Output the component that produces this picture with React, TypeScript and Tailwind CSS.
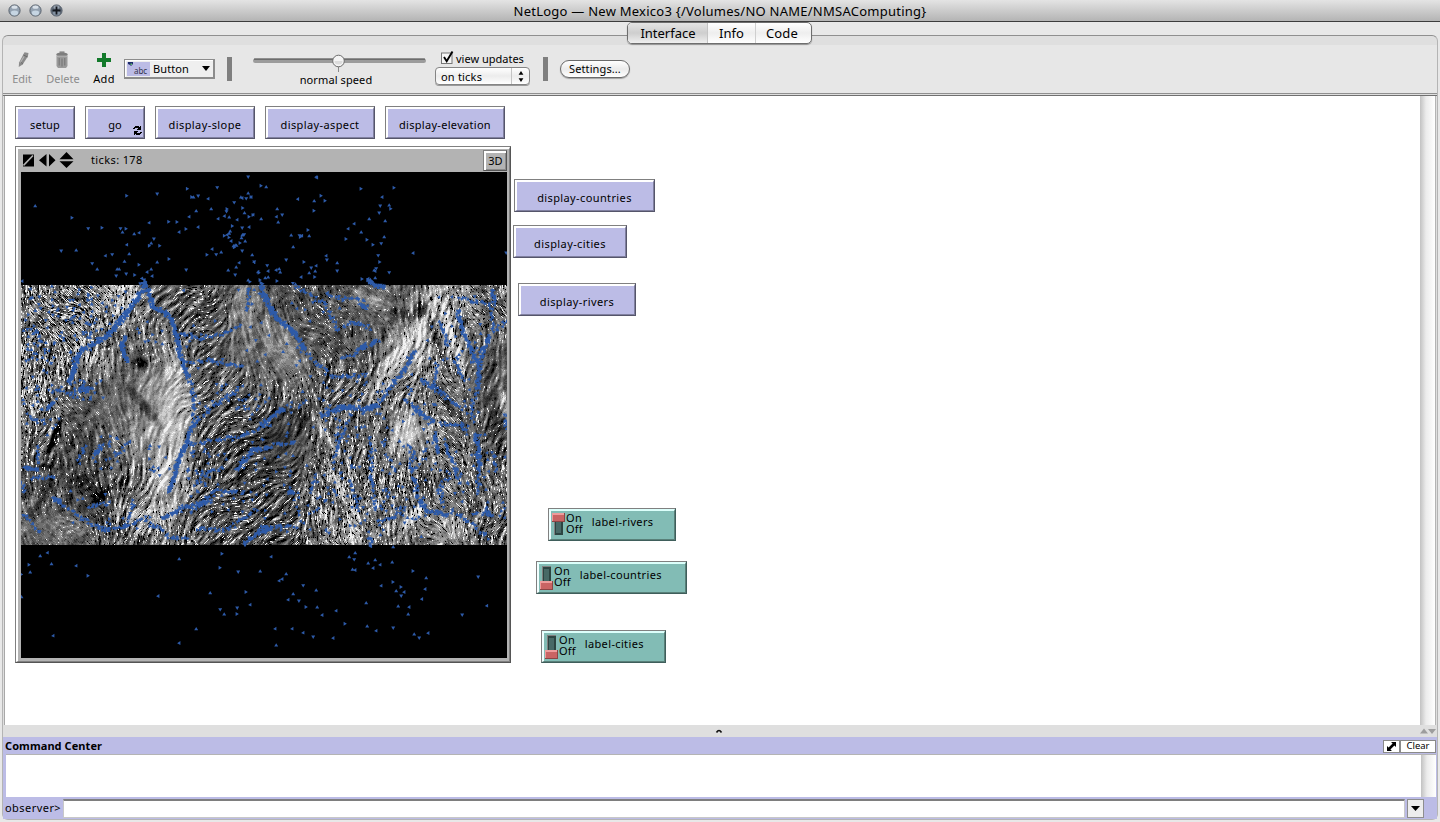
import { useMemo } from "react";
import type { ReactNode } from "react";

/* ---------- terrain model ---------- */
const W = 486;
const H = 260;
const BLUE = "#2d5aa8";

// brightness (0-9) of the relief on a coarse 12x6 lattice
const LUM = [
  [5, 5, 6.6, 4.2, 3.4, 4.9, 3.4, 3.7, 4.2, 4.7, 6.6, 5.4],
  [5, 5.6, 4.2, 5, 3.9, 4.8, 4.7, 3.9, 3.9, 6.2, 6.2, 4.2],
  [5.5, 4, 4.6, 7, 4.3, 4.1, 4.3, 4.3, 4.8, 5.2, 5.2, 3.8],
  [4.6, 3.2, 5.2, 7.6, 3.6, 3.2, 2.7, 4.5, 4.6, 6.9, 5.1, 3.9],
  [3.4, 2.9, 3.6, 6.8, 3.8, 3.1, 3, 4.7, 5.1, 5.1, 5, 4.6],
  [4.2, 4.2, 4.5, 5.6, 4.1, 3.3, 3.3, 5, 5.5, 5, 5.5, 4.4],
];
// amount of fine black/white speckle
const CON = [
  [11, 11, 9, 6, 8, 4, 6, 7, 5, 6, 8, 9],
  [11, 10, 6, 7, 7, 4, 3, 7, 6, 6, 8, 5],
  [11, 6, 4, 2, 8, 8, 8, 8, 9, 8, 9, 5],
  [8, 6, 6, 3, 8, 8, 2, 8, 8, 4, 9, 7],
  [7, 6, 8, 6, 8, 8, 7, 9, 11, 10, 9, 8],
  [5, 6, 9, 8, 8, 8, 8, 9, 9, 7, 7, 9],
];
// direction of the valleys in degrees, y pointing down
const ANG = [
  [50, 52, 80, 110, 150, 100, 38, 40, 50, 60, 70, 60],
  [70, 80, 100, 100, 130, 70, 65, 45, 60, 115, 70, 100],
  [80, 60, 60, 130, 140, 125, 100, 110, 110, 110, 60, 100],
  [100, 70, 60, 100, 135, 145, 150, 60, 90, 90, 65, 110],
  [80, 60, 110, 110, 130, 150, 155, 65, 95, 80, 65, 90],
  [50, 45, 110, 110, 150, 160, 160, 75, 80, 60, 45, 110],
];

function hash(x: number, y: number, s: number) {
  let h = Math.imul(x, 374761393) ^ Math.imul(y, 668265263) ^ Math.imul(s, 1442695041);
  h = Math.imul(h ^ (h >>> 13), 1274126177);
  h ^= h >>> 16;
  return (h >>> 0) / 4294967296;
}

function smooth(x: number, y: number, s: number) {
  const xi = Math.floor(x);
  const yi = Math.floor(y);
  const fx = x - xi;
  const fy = y - yi;
  const u = fx * fx * (3 - 2 * fx);
  const v = fy * fy * (3 - 2 * fy);
  const a = hash(xi, yi, s) * (1 - u) + hash(xi + 1, yi, s) * u;
  const b = hash(xi, yi + 1, s) * (1 - u) + hash(xi + 1, yi + 1, s) * u;
  return a * (1 - v) + b * v;
}

function lattice(t: number[][], x: number, y: number) {
  const gx = Math.min(10.999, Math.max(0, (x - 20) / 40.5));
  const gy = Math.min(4.999, Math.max(0, (y - 22) / 43.3));
  const c = Math.floor(gx);
  const r = Math.floor(gy);
  const u = gx - c;
  const v = gy - r;
  return (t[r][c] * (1 - u) + t[r][c + 1] * u) * (1 - v) + (t[r + 1][c] * (1 - u) + t[r + 1][c + 1] * u) * v;
}

// local accents: centre, radii, tilt, brightness change
const ACCENTS: number[][] = [
  [160, 130, 18, 44, 0, 1.8],
  [152, 75, 14, 26, -20, 1.6],
  [150, 190, 22, 22, 10, 1.8],
  [120, 78, 9, 6, 20, -4],
  [122, 120, 5, 26, -40, -3],
  [33, 152, 3, 22, 20, -5],
  [24, 182, 8, 4, 0, -3],
  [70, 70, 26, 12, 40, 1.4],
  [130, 232, 30, 14, -20, 2],
  [100, 225, 12, 10, 0, 2],
  [75, 210, 10, 26, -50, -2],
  [90, 240, 40, 7, 30, -1.5],
  [40, 238, 26, 12, 0, 0.8],
  [104, 12, 10, 24, 25, 2],
  [225, 22, 14, 22, 0, 1.2],
  [262, 62, 14, 40, -35, 1.6],
  [266, 126, 22, 5, 15, -2],
  [262, 146, 34, 8, -20, -1],
  [305, 150, 4, 26, -35, 3],
  [320, 205, 4, 34, -30, 3],
  [300, 225, 4, 24, -35, 2.4],
  [376, 70, 8, 52, 30, 3.4],
  [403, 40, 5, 52, 14, 2.8],
  [400, 25, 7, 10, 0, -4],
  [380, 28, 15, 5, 20, -3],
  [350, 15, 26, 6, 25, 1.8],
  [385, 145, 14, 20, 0, 2],
  [362, 152, 6, 26, 10, -1.6],
  [430, 50, 6, 40, -20, 2.6],
  [415, 55, 4, 34, -20, -3],
  [470, 20, 10, 18, 0, -1.4],
  [480, 72, 6, 40, 50, -1],
  [476, 140, 9, 30, 0, -1.4],
  [483, 122, 4, 22, -10, 4],
  [405, 200, 5, 30, -10, -2.6],
  [425, 115, 5, 26, -35, -2.6],
  [392, 232, 6, 22, 40, 3.4],
  [430, 242, 20, 12, 30, 1.6],
  [330, 245, 10, 14, 0, 2],
];

function relief() {
  const field = new Float32Array(W * H);
  for (let y = 0; y < H; y++)
    for (let x = 0; x < W; x++)
      field[y * W + x] = ((lattice(ANG, x, y) + (smooth(x / 24, y / 24, 5) - 0.5) * 70) * Math.PI) / 180;
  const at = (x: number, y: number) =>
    field[Math.max(0, Math.min(H - 1, Math.round(y))) * W + Math.max(0, Math.min(W - 1, Math.round(x)))];

  // noise averaged along the valley direction
  const comb = (x: number, y: number, step: number, count: number, sample: (a: number, b: number) => number) => {
    let sum = sample(x, y);
    for (let dir = -1; dir <= 1; dir += 2) {
      let px = x;
      let py = y;
      for (let k = 0; k < count; k++) {
        const a = at(px, py);
        px += Math.cos(a) * step * dir;
        py += Math.sin(a) * step * dir;
        sum += sample(px, py);
      }
    }
    return sum / (2 * count + 1) - 0.5;
  };
  const coarse = new Float32Array(W * H);
  for (let y = 0; y < H; y++)
    for (let x = 0; x < W; x++) coarse[y * W + x] = comb(x, y, 2.2, 2, (a, b) => smooth(a / 2.6, b / 2.6, 21));

  const shades = ["#000000", "#1c1c1c", "#303030", "#434343", "#585858", "#6e6e6e", "#868686", "#a0a0a0", "#b8b8b8", "#d0d0d0", "#f2f2f2"];
  const paths: string[][] = shades.map(() => []);
  for (let y = 0; y < H; y++) {
    let start = 0;
    let last = -1;
    for (let x = 0; x <= W; x++) {
      let lvl = -2;
      if (x < W) {
        const n = comb(x, y, 1, 1, (a, b) => hash(Math.round(a), Math.round(b), 1)) * 1.7;
        const con = lattice(CON, x, y);
        let v = lattice(LUM, x, y) + 0.1;
        // spurs crossing the slope, lit from the upper left
        const face = coarse[y * W + x] - coarse[Math.min(H - 1, y + 2) * W + Math.min(W - 1, x + 2)];
        v += face * (3 + con * 0.75) + coarse[y * W + x] * 2;
        const big = smooth(x / 9, y / 9, 3) - smooth(x / 9 + 0.35, y / 9 + 0.25, 3);
        v += big * 3.4;
        for (const [ax, ay, rx, ry, t, d] of ACCENTS) {
          const ex = x - ax;
          const ey = y - ay;
          if (Math.abs(ex) > 70 || Math.abs(ey) > 70) continue;
          const tr = (t * Math.PI) / 180;
          const qx = (ex * Math.cos(tr) + ey * Math.sin(tr)) / rx;
          const qy = (-ex * Math.sin(tr) + ey * Math.cos(tr)) / ry;
          const q = qx * qx + qy * qy;
          if (q < 2.2) v += d * Math.exp(-q * q);
        }
        v += n * con * 0.16;
        v += (hash(x, y, 31) - 0.5) * 0.9;
        const spark = n * con + face * 4;
        if (spark > 3.7) v = 10.5;
        else if (spark > 3) v += 2;
        if (spark < -3.8) v = 0;
        else if (spark < -3) v -= 2;
        lvl = Math.max(0, Math.min(10, Math.round(v)));
      }
      if (lvl !== last) {
        if (last >= 0) paths[last].push(`M${start} ${y}h${x - start}v1h-${x - start}z`);
        start = x;
        last = lvl;
      }
    }
  }
  return shades.map((fill, i) => ({ fill, d: paths[i].join("") }));
}

/* ---------- water: streams and single drops, coordinates at 3x ---------- */
// each entry: thickness, then x,y pairs relative to the relief's left edge
const WEST: number[][] = [
  [5, 400, 0, 400, 22, 370, 70, 330, 125],
  [3.6, 330, 125, 290, 170, 210, 212, 192, 270, 175, 305],
  [3.6, 410, 20, 430, 80, 470, 100, 490, 130, 495, 160],
  [4.4, 495, 160, 515, 235, 535, 290],
  [2, 535, 290, 546, 330, 552, 380, 548, 440],
  [3.2, 545, 440, 530, 490, 505, 540, 490, 600, 475, 635],
  [3.4, 345, 168, 335, 200, 352, 240],
  [2.2, 500, 160, 570, 175, 640, 160, 690, 140],
  [1.4, 530, 245, 600, 240, 650, 255, 700, 255],
  [3.2, 45, 565, 82, 567],
  [2.2, 60, 595, 132, 588],
  [3, 128, 655, 150, 665],
  [2, 130, 655, 210, 712, 280, 750],
  [2.2, 280, 750, 345, 740, 400, 715, 440, 740, 480, 772, 530, 775],
  [2, 545, 440, 620, 370, 690, 320],
  [2, 540, 495, 620, 480, 700, 465, 780, 432],
  [2.5, 680, 570, 700, 545, 730, 510, 780, 505],
  [2.4, 455, 720, 520, 682, 600, 665],
  [1.8, 555, 620, 600, 575, 640, 565],
  [3, 130, 365, 112, 388],
  [1.8, 60, 420, 105, 428],
  [2, 130, 330, 180, 342, 240, 330],
  [2.5, 205, 325, 240, 328],
  [2.5, 250, 525, 275, 498],
  [1.6, 205, 540, 225, 500],
  [2, 320, 530, 360, 482],
  [2.5, 700, 792, 735, 765, 780, 748],
  [1.8, 80, 500, 84, 550],
  [2, 35, 600, 42, 640],
  [1.8, 38, 700, 90, 758],
  [2, 345, 745, 370, 665],
  [1.5, 230, 680, 300, 670],
  [1.6, 715, 20, 712, 90],
  [1.4, 270, 740, 300, 748],
  [1.4, 560, 745, 650, 750, 740, 690],
  [1.4, 540, 700, 620, 630, 700, 640],
];
const EAST: number[][] = [
  [5, 0, 20, 20, 60, 45, 110],
  [3.6, 45, 110, 75, 135, 110, 165, 130, 205],
  [2, 130, 205, 170, 255, 205, 270],
  [2.4, 180, 408, 240, 382, 330, 385, 355, 375],
  [2.5, 235, 380, 280, 383],
  [3, 320, 385, 350, 380],
  [2, 360, 370, 400, 310],
  [2.5, 400, 310, 430, 272, 462, 215],
  [3, 325, 0, 345, 15, 375, 22],
  [1.8, 110, 20, 190, 70, 215, 110, 235, 148],
  [2, 245, 140, 285, 128, 330, 142],
  [1.6, 200, 40, 250, 58, 310, 60],
  [3.4, 300, 75, 318, 82],
  [2.2, 240, 235, 280, 225, 300, 205],
  [2.5, 290, 208, 320, 195, 352, 185],
  [2.2, 200, 287, 320, 287],
  [2.5, 0, 438, 40, 408, 75, 382],
  [2.5, 592, 90, 602, 130, 612, 160],
  [2.4, 612, 160, 630, 200, 640, 225, 660, 260],
  [2.5, 660, 260, 655, 320],
  [2.2, 655, 320, 636, 370, 638, 420],
  [2.5, 645, 460, 655, 510, 655, 560],
  [2, 655, 560, 652, 640],
  [2.5, 690, 165, 672, 200, 664, 240],
  [2, 738, 122, 700, 155],
  [2.2, 595, 55, 650, 65, 700, 72],
  [2.5, 700, 30, 700, 60],
  [2.2, 695, 80, 697, 145],
  [2, 440, 362, 480, 395],
  [2.5, 465, 385, 495, 412, 520, 425],
  [1.6, 540, 432, 605, 432, 615, 460],
  [2.4, 480, 300, 550, 340],
  [1.8, 550, 345, 600, 385],
  [2.5, 520, 460, 535, 520],
  [2, 550, 480, 585, 560, 600, 610],
  [2, 330, 470, 335, 600, 345, 690],
  [1.8, 265, 420, 235, 500, 215, 545],
  [2, 455, 500, 452, 560, 475, 640],
  [2.4, 470, 650, 500, 690, 560, 705],
  [2.2, 570, 690, 620, 720, 680, 772],
  [1.8, 640, 700, 690, 700],
  [3.6, 678, 690, 688, 700],
  [2, 350, 725, 400, 712, 430, 685],
  [1.8, 0, 748, 55, 740, 105, 740],
  [1.6, 270, 600, 295, 690],
  [1.8, 540, 600, 548, 675],
  [2, 0, 507, 60, 492, 105, 490],
  [1.8, 530, 250, 525, 310],
  [2, 580, 240, 610, 300],
  [2, 540, 120, 560, 190],
  [3, 88, 632, 102, 640],
  [1.6, 150, 640, 165, 590],
  [2.5, 325, 770, 335, 790],
  [1.6, 737, 400, 738, 445],
  [1.8, 700, 520, 705, 570],
  [2.5, 0, 742, 20, 745],
];

// drop clouds: x, y, rx, ry, count (picture units inside the relief)
const CLOUDS: number[][] = [
  [35, 40, 36, 40, 100],
  [75, 30, 30, 26, 44],
  [15, 85, 22, 45, 45],
  [20, 125, 22, 25, 18],
  [65, 105, 18, 10, 28],
  [75, 165, 22, 20, 26],
  [130, 45, 14, 14, 12],
  [140, 175, 14, 16, 16],
  [60, 225, 30, 20, 8],
  [110, 232, 30, 12, 8],
  [200, 30, 50, 30, 16],
  [205, 70, 40, 15, 12],
  [210, 115, 40, 18, 40],
  [220, 190, 60, 40, 60],
  [180, 185, 14, 28, 26],
  [270, 130, 50, 20, 20],
  [300, 50, 40, 40, 22],
  [320, 110, 50, 20, 36],
  [345, 175, 34, 50, 76],
  [390, 195, 30, 40, 50],
  [420, 100, 40, 40, 46],
  [430, 190, 40, 50, 50],
  [440, 45, 35, 35, 26],
  [470, 200, 16, 35, 24],
  [300, 210, 40, 35, 24],
  [270, 225, 50, 25, 26],
  [380, 235, 40, 18, 14],
];

// isolated walkers above and below the relief
const ABOVE_A = [744,261,651,293,562,296,380,317,471,312,575,321,580,321,594,318,624,326,105,347,216,383,264,416,306,413,361,416,378,416,367,426,402,431,417,428,447,398,506,395,531,396,567,380,588,362,633,356,702,338,722,321,726,324,738,326,744,309,753,321,728,354,733,368,681,357,679,365,673,378,687,381,654,386,711,389,747,380,759,374,594,411,558,417,537,426,697,408,726,414,747,411,690,423,687,430,673,437,681,434,687,442,726,435,732,434,724,443,735,453,720,459,705,465,709,466,703,472,700,467,693,453,461,447,453,459,448,467,479,467,380,464,183,483,228,480,316,497,336,494,387,491,507,507,471,516,417,524,373,514,276,521,291,537,351,537,357,537,348,558,378,552,404,555,453,537,441,546,456,558,558,540,621,494,636,477,648,494,663,486,726,483,756,494,717,518,708,531,684,540,762,516,705,555,66,573,744,570,750,575,774,545,425,565,432,570,430,578,436,580,420,582];
const ABOVE_B = [198,261,200,263,33,287,48,290,333,296,432,293,396,321,213,317,225,332,192,332,143,327,3,321,192,362,81,356,9,375,96,375,79,380,84,396,33,386,390,348,417,345,422,356,387,369,405,392,357,386,312,401,294,416,333,426,288,447,351,449,369,464,402,440,393,461,174,420,177,437,123,435,148,437,155,437,151,441,129,470,489,489,768,489,6,494,12,516,108,510,162,516,228,497,230,510,261,518,261,543,198,527,195,543,183,534,177,548,194,561,153,561,51,527,54,543,27,548,78,540,90,546,87,536,54,561,45,563,81,573,30,570,24,546,384,497,389,516,378,536,372,540,375,543,417,548,336,567,354,566,375,563,357,575,365,578,360,580,128,580,136,582,33,578,38,581];
const BELOW = [97,38,75,47,42,74,45,96,109,71,183,77,219,107,19,103,19,170,114,287,429,168,492,56,621,41,615,83,669,96,735,93,768,50,813,101,801,117,792,122,864,137,903,150,834,161,819,179,851,183,693,156,585,158,705,194,666,204,666,222,615,209,627,222,873,201,906,201,921,225,963,212,990,251,543,266,492,309,780,266,831,266,864,278,894,291,954,294,783,315,1056,258,1083,272,1134,264,1197,282,1212,294,1239,279,1341,225,1415,197,1389,111,1220,177,1230,147,1233,113,1194,93,1182,201,1179,222,1149,198,1158,168,1167,156,1143,152,1158,141,1134,126,1098,137,1053,188,1131,66,1095,74,1074,84,1080,59,1059,69,1020,38,1002,50,1017,59,1012,88,1020,90,1067,19,1134,20];

function buildWater() {
  const out: string[] = [];
  let seed = 1;
  const rnd = () => hash(seed++, 77, 13);
  // every triangle is wound clockwise so that overlaps stay filled
  const walker = (x: number, y: number) => {
    const k = Math.floor(rnd() * 4);
    const cx = x.toFixed(1);
    const cy = y.toFixed(1);
    if (k === 0) out.push(`M${cx} ${cy}m.2-1.800l2 3.300h-4z`);
    else if (k === 1) out.push(`M${cx} ${cy}m.2 1.900l-2-3.300h4z`);
    else if (k === 2) out.push(`M${cx} ${cy}m-1.400-1.900l3.300 2l-3.300 1.900z`);
    else out.push(`M${cx} ${cy}m1.400-1.900v3.800l-3.300-1.700z`);
  };
  const draw = (sets: number[][], ox: number) => {
    for (const s of sets) {
      const w = s[0];
      for (let i = 1; i + 3 < s.length; i += 2) {
        const x0 = s[i] / 3 + ox;
        const y0 = s[i + 1] / 3 + 108;
        const x1 = s[i + 2] / 3 + ox;
        const y1 = s[i + 3] / 3 + 108;
        const len = Math.hypot(x1 - x0, y1 - y0);
        const n = Math.ceil(len * (w > 2.5 ? 1.4 : w > 2.3 ? 0.9 : 0.42));
        for (let k = 0; k <= n; k++) {
          const t = (k + rnd() * 0.6) / n;
          const j = w > 2.5 ? w : w > 2.3 ? 4 : 3.4;
          walker(x0 + (x1 - x0) * t + (rnd() - 0.5) * j, y0 + (y1 - y0) * t + (rnd() - 0.5) * j);
        }
      }
    }
  };
  draw(WEST, -11);
  draw(EAST, 239);
  for (const [cx, cy, rx, ry, n] of CLOUDS) {
    for (let k = 0; k < n * 0.8; k++) {
      const x = cx + (rnd() * 2 - 1) * rx;
      const y = cy + (rnd() * 2 - 1) * ry;
      if (x > 1 && x < W - 2 && y > 1 && y < H - 2) walker(x, y + 113);
    }
  }
  const single = (list: number[], ox: number, oy: number) => {
    for (let i = 0; i < list.length; i += 2) walker(list[i] / 3 + ox, list[i + 1] / 3 + oy);
  };
  single(ABOVE_A, -21, -82);
  single(ABOVE_B, 229, -82);
  single(BELOW, -6, 368);
  return out.join("");
}

function WorldView() {
  const layers = useMemo(relief, []);
  const water = useMemo(buildWater, []);
  return (
    <svg width={486} height={486} viewBox="0 0 486 486" className="block bg-black">
      <g transform="translate(0 113)" shapeRendering="crispEdges">
        {layers.map((l) => (
          <path key={l.fill} d={l.d} fill={l.fill} />
        ))}
      </g>
      <path d={water} fill={BLUE} />
    </svg>
  );
}

/* ---------- widgets ---------- */
function Bevel({ className, children }: { className: string; children?: ReactNode }) {
  return (
    <div className={`absolute border border-[#808080] border-r-[#55556a] border-b-[#55556a] ${className}`}>
      <div className="flex h-full w-full items-center justify-center border-2 border-r-1 border-b-1 border-t-white border-r-[#8080a0] border-b-[#8080a0] border-l-white bg-[#bcbce6] pt-[3px] pr-px text-[11px] leading-none">
        {children}
      </div>
    </div>
  );
}

function Switch({ className, label, on }: { className: string; label: string; on?: boolean }) {
  return (
    <div className={`absolute h-[33px] border border-[#808080] border-r-[#3f5e5b] border-b-[#3f5e5b] ${className}`}>
      <div className="flex h-full w-full border-2 border-r-1 border-b-1 border-t-[#dcfffb] border-r-[#598079] border-b-[#598079] border-l-[#f2ffff] bg-[#82bcb5]">
        <svg width="14" height="26" viewBox="0 0 14 26" shapeRendering="crispEdges" className="mt-px ml-px block shrink-0">
          <path d="M2 1h9v22h-9z" fill="#808080" />
          <path d="M3 2h8v21h-8z" fill="#2c4441" />
          <path d="M4 4h5v17h-5z" fill="#476966" />
          <g transform={on ? "translate(0 1)" : "translate(0 16)"}>
            <path d="M0 0h13v9h-13z" fill="#8a4545" />
            <path d="M0 0h12v8h-12z" fill="#ee9c9c" />
            <path d="M1 2h11v6h-11z" fill="#c96464" />
          </g>
        </svg>
        <div className="pt-px text-[11px] leading-[11px]">
          <div className="tracking-[0.3px]">On</div>
          <div className="tracking-[0.2px]">Off</div>
        </div>
        <div className="ml-[9px] pt-[4px] text-[11px] leading-[13px] tracking-[0.36px]">{label}</div>
      </div>
    </div>
  );
}

function Light({ plus }: { plus?: boolean }) {
  return (
    <svg width="13" height="13" viewBox="0 0 13 13" className="block">
      <circle cx="6.5" cy="6.5" r="5.6" fill={plus ? "#5f6a78" : "#93a1b0"} stroke="#59626d" strokeWidth="1" />
      <ellipse cx="6.5" cy="9" rx="3.6" ry="2.4" fill={plus ? "#8492a2" : "#c6d5e2"} />
      <ellipse cx="6.5" cy="3.2" rx="3" ry="1.6" fill={plus ? "#98a3b0" : "#d9e1e9"} />
      {plus && <path d="M6.500 2.500v8M2.500 6.500h8" stroke="#14181e" strokeWidth="1.8" />}
    </svg>
  );
}

function TitleBar() {
  return (
    <div className="flex h-[22px] shrink-0 items-center border-b border-[#3c3c3c] bg-linear-to-b from-[#e4e4e4] to-[#b4b4b4]">
      <div className="flex w-[100px] gap-2 pl-[8px]">
        <Light />
        <Light />
        <Light plus />
      </div>
      <div className="flex-1 text-center text-[13px] leading-[20px] tracking-[0.25px]">
        NetLogo — New Mexico3 {"{/Volumes/NO NAME/NMSAComputing}"}
      </div>
      <div className="w-[100px]" />
    </div>
  );
}

function Tabs() {
  return (
    <div className="absolute top-[-14px] left-[624px] flex h-[22px] w-[185px] overflow-hidden rounded-[5px] border border-[#6e6e6e] bg-linear-to-b from-white via-[#eeeeee] to-white text-[13px] leading-[20px] shadow-[0_1px_1px_rgba(0,0,0,0.35)]">
      <div className="w-[80px] border-r border-[#c4c4c4] bg-linear-to-b from-[#e4e4e4] via-[#cecece] to-[#efefef] pl-px text-center">Interface</div>
      <div className="w-[48px] border-r border-[#cfcfcf] text-center">Info</div>
      <div className="flex-1 pr-[3px] text-center tracking-[0.2px]">Code</div>
    </div>
  );
}

function Toolbar() {
  return (
    <div className="flex h-[48px] shrink-0 items-start bg-[#e7e7e7] text-[11px] leading-[13px]">
      <div className="ml-[7px] flex w-[24px] flex-col items-center text-[#8c8c8c]">
        <svg width="16" height="18" viewBox="0 0 16 18" className="mt-[6px] ml-px block">
          <path d="M9.500 1.200l4 .8-.6 3.300-5.200 8.200-4 2.600.4-4.600z" fill="#8b8b8b" />
          <path d="M8.500 4l4 2M5 10.500l2.800 2.200" stroke="#6b6b6b" strokeWidth="1" />
          <path d="M9 5.500l-3.600 6" stroke="#b5b5b5" strokeWidth="1.200" />
        </svg>
        <div className="mt-[3px]">Edit</div>
      </div>
      <div className="ml-[11px] flex w-[36px] flex-col items-center text-[#8c8c8c]">
        <svg width="14" height="18" viewBox="0 0 14 18" className="mt-[6px] mr-[2px] block">
          <path d="M1.500 4.500h11v10.500l-1.500 2h-8l-1.500-2z" fill="#9a9a9a" />
          <ellipse cx="7" cy="3.600" rx="5.800" ry="2.200" fill="#7d7d7d" />
          <path d="M4.500 1.200h5" stroke="#858585" strokeWidth="1.600" />
          <path d="M4.200 7v7.500M7 7.500v8M9.800 7v7.500" stroke="#737373" strokeWidth="1" />
          <path d="M2 5.200h10" stroke="#bdbdbd" strokeWidth="1" />
        </svg>
        <div className="mt-[3px]">Delete</div>
      </div>
      <div className="ml-[8px] flex w-[30px] flex-col items-center">
        <svg width="14" height="14" viewBox="0 0 14 14" shapeRendering="crispEdges" className="mt-[8px] block">
          <path d="M5 0h4v5h5v4h-5v5h-4v-5h-5v-4h5z" fill="#137a2b" />
        </svg>
        <div className="mt-[5px] tracking-[0.3px]">Add</div>
      </div>
      <div className="mt-[14px] ml-[5px] flex h-[20px] w-[91px] items-center border-2 border-t-1 border-l-1 border-[#8c8c8c] bg-[#efefef] px-[2px] shadow-[inset_1px_1px_0_white]">
        <div className="flex h-[14px] w-[23px] items-end bg-[#bcbce6]">
          <svg width="7" height="6" viewBox="0 0 7 6" className="mb-[8px] block">
            <path d="M1 0h5v2l-2 2-1-1-2-1z" fill="#1d2c6b" />
            <path d="M3.500 1.500h1.500v1.500h-1.500z" fill="#62c06a" />
          </svg>
          <span className="text-[8px] leading-[11px] tracking-[-0.1px] text-[#33334d]">abc</span>
        </div>
        <span className="ml-[3px] tracking-[0.1px]">Button</span>
        <svg width="8" height="5" viewBox="0 0 8 5" className="ml-auto block">
          <path d="M0 0h8l-4 5z" fill="#000" />
        </svg>
        <span className="w-[1px]" />
      </div>
      <div className="mt-[12px] ml-[12px] h-[24px] w-[5px] bg-[#7f7f7f]" />
      <div className="ml-[19px] w-[178px]">
        <svg width="178" height="24" viewBox="0 0 178 24" className="mt-[7px] block">
          <rect x="2" y="6.500" width="173" height="4.500" rx="2.200" fill="#9c9c9c" />
          <path d="M3 7.200h171" stroke="#5e5e5e" strokeWidth="1.200" />
          <path d="M87.500 14v6" stroke="#8a8a8a" strokeWidth="1" />
          <circle cx="87.500" cy="9" r="5.800" fill="#f4f4f4" stroke="#6d6d6d" strokeWidth="1" />
          <path d="M83.500 9a4 3.500 0 0 0 8 0z" fill="#dcdcdc" />
        </svg>
        <div className="mt-[-3px] pr-[8px] text-center tracking-[0.1px]">normal speed</div>
      </div>
      <div className="ml-[6px] w-[98px]">
        <div className="mt-[6px] flex h-[14px] items-center">
          <svg width="14" height="14" viewBox="0 0 14 14" className="ml-[5px] block">
            <rect x="1.500" y="2" width="10.500" height="10.500" fill="#f6f6f6" stroke="#777" />
            <path d="M4 6l2.700 4.200L12.500 .5" fill="none" stroke="#000" strokeWidth="1.900" />
          </svg>
          <span className="ml-[2px]">view updates</span>
        </div>
        <div className="mt-[2px] flex h-[18px] w-[95px] items-center rounded-[4px] border border-[#858585] bg-linear-to-b from-white via-[#ececec] to-white pl-[5px] shadow-[0_1px_0_#9a9a9a]">
          <span className="flex-1 tracking-[0.2px]">on ticks</span>
          <div className="flex h-full w-[18px] items-center justify-center border-l border-[#c4c4c4]">
            <svg width="6" height="11" viewBox="0 0 6 11" className="block">
              <path d="M3 0l2.400 3.800h-4.800zM3 11l2.400-3.800h-4.800z" fill="#000" />
            </svg>
          </div>
        </div>
      </div>
      <div className="mt-[12px] ml-[10px] h-[24px] w-[5px] bg-[#7f7f7f]" />
      <div className="mt-[15px] ml-[12px] h-[18px] w-[70px] rounded-full border border-[#6a6a6a] bg-linear-to-b from-white via-[#ebebeb] to-white text-center leading-[16px] tracking-[0.1px] shadow-[0_1px_1px_rgba(0,0,0,0.3)]">
        Settings...
      </div>
    </div>
  );
}

function ScrollTrack() {
  return <div className="w-[15px] shrink-0 bg-linear-to-r from-[#c2c2c2] via-[#ececec] via-40% to-white" />;
}

function Workspace() {
  return (
    <div className="flex h-[629px] shrink-0 border-l border-[#a8a8a8] bg-white">
      <div className="relative flex-1">
        <Bevel className="top-[10px] left-[10px] h-[33px] w-[60px] tracking-[0.15px]">setup</Bevel>
        <Bevel className="top-[10px] left-[80px] h-[33px] w-[60px]">
          go
          <svg width="9" height="9" viewBox="0 0 9 9" shapeRendering="crispEdges" className="absolute right-[2px] bottom-[3px] block">
            <path d="M2 0h4v1h1v-1h1v4h-4v-1h1v-1h-3v1h-2v-1h1v-1h1zM1 5h4v1h-1v1h3v-1h2v1h-1v1h-1v1h-4v-1h-1v1h-1z" fill="#000" />
          </svg>
        </Bevel>
        <Bevel className="top-[10px] left-[150px] h-[33px] w-[100px] tracking-[0.42px]">display-slope</Bevel>
        <Bevel className="top-[10px] left-[260px] h-[33px] w-[110px] tracking-[0.38px]">display-aspect</Bevel>
        <Bevel className="top-[10px] left-[380px] h-[33px] w-[120px] tracking-[0.3px]">display-elevation</Bevel>
        <Bevel className="top-[83px] left-[509px] h-[33px] w-[141px] tracking-[0.38px]">display-countries</Bevel>
        <Bevel className="top-[129px] left-[508px] h-[33px] w-[114px] tracking-[0.4px]">display-cities</Bevel>
        <Bevel className="top-[187px] left-[513px] h-[33px] w-[118px] tracking-[0.4px]">display-rivers</Bevel>

        <div className="absolute top-[50px] left-[10px] h-[517px] w-[496px] border border-[#808080] border-r-[#555] border-b-[#555]">
          <div className="h-full border-2 border-r-1 border-b-1 border-t-white border-r-[#808080] border-b-[#808080] border-l-white bg-[#b3b3b3] pl-[3px]">
            <div className="flex h-[23px] items-start pt-px pl-[2px]">
              <svg width="52" height="16" viewBox="0 0 52 16" className="mt-[2px] block">
                <path d="M0 2.500h11v12h-11z" fill="#000" />
                <path d="M.5 13.500l9.500-10" stroke="#b3b3b3" strokeWidth="1.600" />
                <path d="M23.500 2v12.500l-7.500-6.200zM26 2v12.500l6.500-6.200z" fill="#000" />
                <path d="M43.500 0l7 7.300h-14zM43.500 16l7-6.800h-14z" fill="#000" />
              </svg>
              <span className="mt-[3px] ml-[16px] text-[11px] leading-[14px] tracking-[0.38px]">ticks: 178</span>
              <div className="mr-[2px] ml-auto flex h-[21px] w-[24px] items-center justify-center border border-[#808080] border-r-[#555] border-b-[#555] pl-px text-[11px] leading-none shadow-[inset_2px_2px_0_white,inset_-1px_-1px_0_#8a8a8a]">
                3D
              </div>
            </div>
            <WorldView />
          </div>
        </div>

        <Switch className="top-[412px] left-[543px] w-[128px]" label="label-rivers" on />
        <Switch className="top-[465px] left-[531px] w-[151px]" label="label-countries" />
        <Switch className="top-[534px] left-[536px] w-[125px]" label="label-cities" />
      </div>
      <ScrollTrack />
      <div className="w-px shrink-0 bg-[#b4b4b4]" />
    </div>
  );
}

function CommandCenter() {
  return (
    <div className="flex flex-1 flex-col bg-[#bcbce6]">
      <div className="flex h-[17px] shrink-0 items-center pr-px pl-[2px]">
        <span className="flex-1 text-[11px] leading-[14px] font-bold tracking-[0.08px]">Command Center</span>
        <div className="mt-[2px] flex h-[13px] w-[17px] items-center justify-center border border-[#8a8a8a] bg-white">
          <svg width="9" height="9" viewBox="0 0 9 9" className="block">
            <path d="M4 0h5v5l-1.600-1.600-4 4L5 9H0V4l1.600 1.600 4-4z" fill="#000" />
          </svg>
        </div>
        <div className="mt-[2px] h-[13px] w-[36px] border border-[#8a8a8a] bg-white text-center text-[9.5px] leading-[10px]">Clear</div>
      </div>
      <div className="mr-px ml-[3px] flex h-[43px] shrink-0 border-t border-[#b4b4b4] bg-white">
        <div className="flex-1" />
        <ScrollTrack />
      </div>
      <div className="flex h-[22px] shrink-0 items-center pt-px pl-[2px] text-[11px]">
        <span className="w-[58px] tracking-[0.45px]">observer&gt;</span>
        <div className="h-[19px] flex-1 border border-t-2 border-[#c8c8c8] border-t-[#7e7e7e] bg-white" />
        <div className="mr-[13px] ml-[2px] flex h-[19px] w-[17px] items-center justify-center border border-[#8e8e8e] bg-[#ededed]">
          <svg width="9" height="5" viewBox="0 0 9 5" className="block">
            <path d="M0 0h9l-4.500 5z" fill="#000" />
          </svg>
        </div>
      </div>
    </div>
  );
}

export default function App() {
  return (
    <div className="flex h-[822px] w-[1440px] flex-col overflow-hidden bg-[#e8e8e8] font-['Lucida_Grande','Noto_Sans',sans-serif] text-black">
      <TitleBar />
      <div className="h-[13px] shrink-0" />
      <div className="relative mx-[2px] mb-[2px] flex flex-1 flex-col rounded-[6px] border border-t-[#8f8f8f] border-r-[#b4b4b4] border-b-[#b4b4b4] border-l-[#b4b4b4] bg-[#dfdfdf]">
        <Tabs />
        <div className="h-[9px] shrink-0" />
        <Toolbar />
        <div className="h-[3px] shrink-0 border-t border-b border-t-[#8f8f8f] border-b-[#707070] bg-[#dedede]" />
        <div className="mr-px ml-px">
          <Workspace />
        </div>
        <div className="flex h-[12px] shrink-0 items-center">
          <svg width="1434" height="11" viewBox="0 0 1434 11" className="block">
            <path d="M713.500 6.500q2.500-4 5 0" fill="none" stroke="#111" strokeWidth="1.600" />
            <path d="M1417 7.500h8l-4-5zM1425 3h8l-4 5z" fill="#9d9d9d" />
          </svg>
        </div>
        <CommandCenter />
      </div>
    </div>
  );
}
